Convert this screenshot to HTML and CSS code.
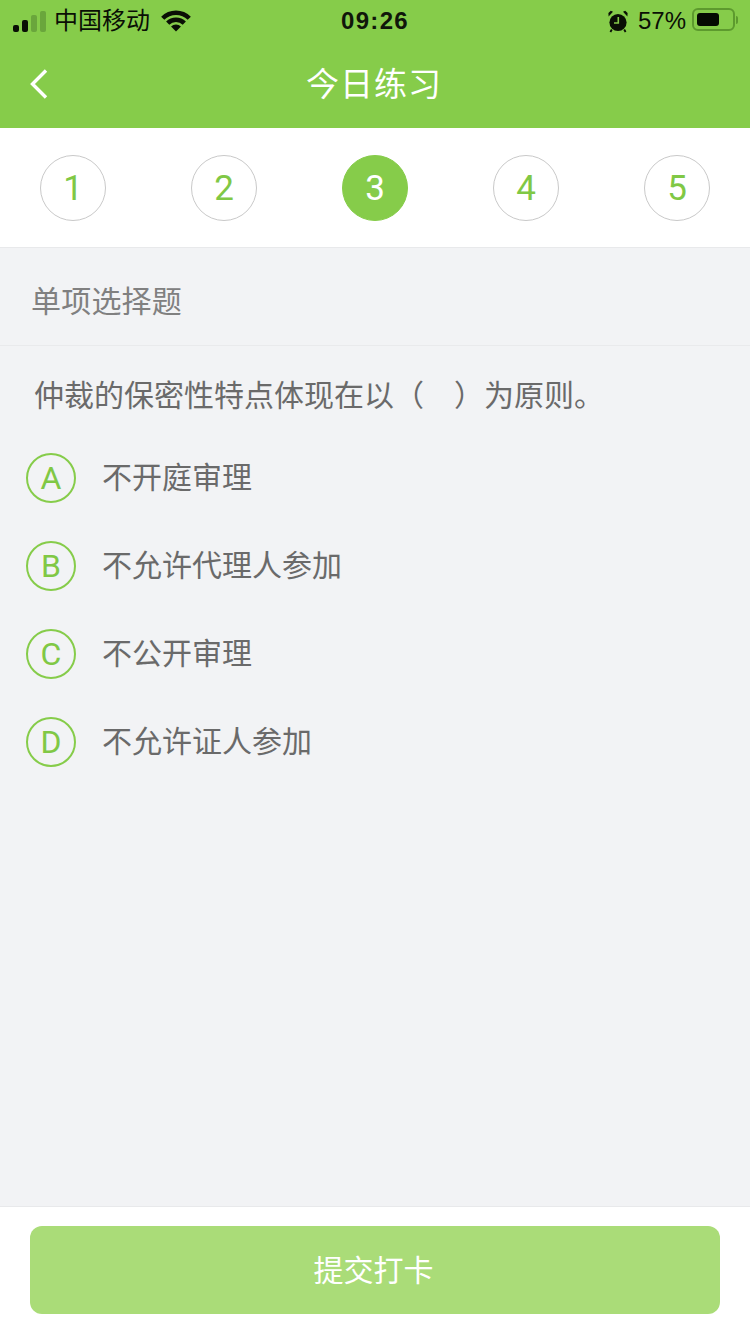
FILE: index.html
```html
<!DOCTYPE html>
<html lang="zh-CN">
<head>
<meta charset="utf-8">
<title>今日练习</title>
<link rel="stylesheet" href="styles.css">
</head>
<body>
<div class="page">
  <header class="header">
    <div class="status">
      <div class="status-left">
        <div class="signal"><i class="b1"></i><i class="b2"></i><i class="b3"></i><i class="b4"></i></div>
        <span class="carrier">中国移动</span>
        <svg class="wifi" width="30" height="22" viewBox="-0.500 0 30 22"><path fill="#0a0f05" d="M-.35 6.650A21 21 0 0 1 29.350 6.650L26.170 9.830A16.500 16.500 0 0 0 2.830 9.830ZM4.600 11.600A14 14 0 0 1 24.400 11.600L21.220 14.780A9.500 9.500 0 0 0 7.780 14.780ZM9.550 16.550A7 7 0 0 1 19.450 16.550L14.500 21.500Z"/></svg>
      </div>
      <div class="time">09:26</div>
      <div class="status-right">
        <svg class="alarm" width="20" height="23" viewBox="0 0 20 23"><circle cx="10" cy="12.500" r="8.600" fill="#0a0f05"/><path d="M.6 6.500 5 1.800 2.800.8.400 3ZM19.400 6.500 15 1.800 17.200.8 19.600 3Z" fill="#0a0f05"/><path d="M3.800 19.500 2.400 22M16.200 19.500 17.600 22" stroke="#0a0f05" stroke-width="1.800"/><path d="M10.300 7V13H6" fill="none" stroke="#86cc4a" stroke-width="1.600"/></svg>
        <span class="percent">57%</span>
        <div class="battery"><div class="battery-level"></div></div>
        <div class="battery-tip"></div>
      </div>
    </div>
    <div class="nav">
      <svg class="back" width="20" height="32" viewBox="0 0 20 32"><path d="M17 2.500 3.500 16 17 29.500" fill="none" stroke="#fff" stroke-width="3.400"/></svg>
      <h1 class="nav-title">今日练习</h1>
    </div>
  </header>

  <nav class="steps">
    <div class="step">1</div>
    <div class="step">2</div>
    <div class="step step-active">3</div>
    <div class="step">4</div>
    <div class="step">5</div>
  </nav>

  <main class="content">
    <div class="type">单项选择题</div>
    <p class="question">仲裁的保密性特点体现在以（<span class="blank"></span>）为原则。</p>
    <ul class="options">
      <li class="option"><span class="letter">A</span><span class="option-text">不开庭审理</span></li>
      <li class="option"><span class="letter">B</span><span class="option-text">不允许代理人参加</span></li>
      <li class="option"><span class="letter">C</span><span class="option-text">不公开审理</span></li>
      <li class="option"><span class="letter">D</span><span class="option-text">不允许证人参加</span></li>
    </ul>
  </main>

  <footer class="footer">
    <button class="submit" type="button"><span class="submit-label">提交打卡</span></button>
  </footer>
</div>
</body>
</html>
```

FILE: styles.css
```css
* { box-sizing: border-box; }
html, body { margin: 0; padding: 0; }
body {
  font-family: "Liberation Sans", "Noto Sans CJK SC", sans-serif;
  background: #f2f3f5;
}
.page {
  width: 750px;
  height: 1334px;
  display: flex;
  flex-direction: column;
  overflow: hidden;
}
.header { background: #86cc4a; height: 128px; flex: none; }
.status {
  height: 40px;
  display: grid;
  grid-template-columns: 1fr auto 1fr;
  align-items: center;
  color: #0a0f05;
}
.status-left { display: flex; align-items: center; padding-left: 13px; }
.signal { display: flex; align-items: flex-end; gap: 3px; height: 21px; }
.signal i { display: block; width: 6px; border-radius: 2px; background: #0a0f05; }
.signal .b1 { height: 7px; }
.signal .b2 { height: 12px; }
.signal .b3 { height: 17px; background: #6aa63c; }
.signal .b4 { height: 21px; background: #6aa63c; }
.carrier { font-size: 24px; line-height: 40px; margin-left: 8px; }
.wifi { margin-left: 11px; }
.time { font-size: 24px; font-weight: 700; letter-spacing: 1.300px; line-height: 42px; color: #10160a; }
.status-right { display: flex; align-items: center; justify-content: flex-end; padding-right: 12px; }
.percent { font-size: 24px; line-height: 42px; margin-left: 10px; }
.battery {
  width: 43px;
  height: 23px;
  margin-left: 6px;
  margin-bottom: 3px;
  padding: 3px;
  border: 2px solid #5d9a2e;
  border-radius: 6px;
}
.battery-level { width: 22px; height: 100%; background: #050a02; border-radius: 3px; }
.battery-tip { width: 2px; height: 8px; margin-left: 1px; margin-bottom: 2px; background: #5d9a2e; border-radius: 0 2px 2px 0; }
.nav {
  height: 88px;
  position: relative;
  display: flex;
  align-items: center;
  justify-content: center;
}
.back { position: absolute; left: 29px; top: 28px; }
.nav-title { margin: 0 2px 0 0; font-size: 33px; font-weight: 400; color: #fff; letter-spacing: 1px; padding-bottom: 5px; }
.steps {
  height: 120px;
  flex: none;
  background: #fff;
  border-bottom: 1px solid #e8e9eb;
  display: flex;
  justify-content: space-between;
  align-items: flex-start;
  padding: 27px 40px 0;
}
.step {
  width: 66px;
  height: 66px;
  border-radius: 50%;
  border: 1px solid #c9c9c9;
  color: #80c845;
  font-family: Roboto, "Liberation Sans", sans-serif;
  font-weight: 400;
  font-size: 35px;
  display: flex;
  align-items: center;
  justify-content: center;
}
.step-active { background: #86cc4a; border-color: #86cc4a; color: #fff; }
.content { flex: 1; min-height: 0; }
.type {
  height: 98px;
  padding-left: 31px;
  border-bottom: 1px solid #e9eaec;
  font-size: 30px;
  line-height: 107px;
  letter-spacing: .2px;
  color: #808080;
}
.question {
  margin: 0;
  padding: 28px 0 0 34px;
  font-size: 30px;
  line-height: 44px;
  color: #6a6a6a;
  white-space: pre;
}
.blank { display: inline-block; width: 30px; }
.options { list-style: none; margin: 16px 0 0; padding: 0 0 0 26px; }
.option { display: flex; align-items: center; height: 88px; }
.letter {
  width: 50px;
  height: 50px;
  flex: none;
  border: 2px solid #86cc4a;
  border-radius: 50%;
  color: #80c845;
  font-family: Roboto, "Liberation Sans", sans-serif;
  font-weight: 400;
  font-size: 32px;
  display: flex;
  align-items: center;
  justify-content: center;
}
.option-text { margin-left: 26px; padding-bottom: 6px; font-size: 30px; color: #6a6a6a; }
.footer {
  height: 128px;
  flex: none;
  background: #fff;
  border-top: 1px solid #e8e9eb;
  padding: 19px 30px 0;
}
.submit {
  display: flex;
  align-items: center;
  justify-content: center;
  width: 100%;
  height: 88px;
  border: 0;
  border-radius: 12px;
  background: #aadc78;
  color: #fff;
  font-family: inherit;
  font-size: 30px;
  padding: 0 3px 5px 0;
}
.submit-label { display: block; }
```
